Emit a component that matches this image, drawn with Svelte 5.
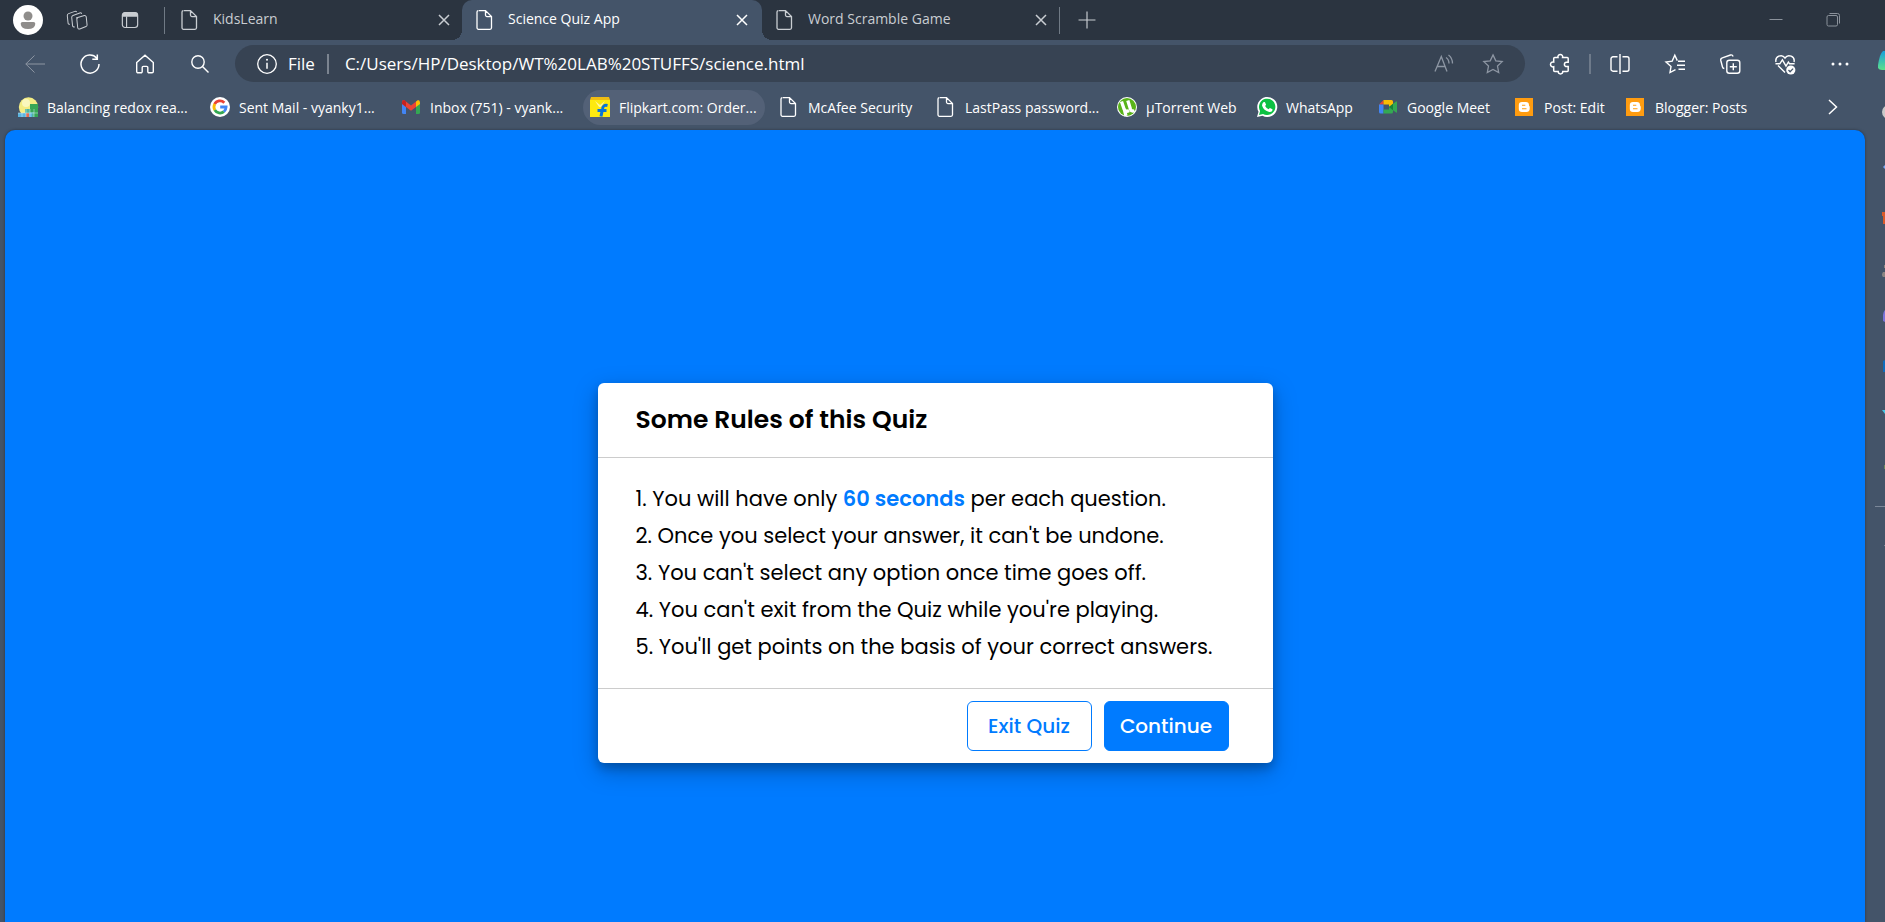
<script>
  const tabs = [
    { title: 'KidsLearn', active: false },
    { title: 'Science Quiz App', active: true },
    { title: 'Word Scramble Game', active: false },
  ];

  const bookmarks = [
    { icon: 'globe', label: 'Balancing redox rea...' },
    { icon: 'google', label: 'Sent Mail - vyanky1...' },
    { icon: 'gmail', label: 'Inbox (751) - vyank...' },
    { icon: 'flipkart', label: 'Flipkart.com: Order...', hover: true },
    { icon: 'file', label: 'McAfee Security' },
    { icon: 'file', label: 'LastPass password...' },
    { icon: 'torrent', label: 'µTorrent Web' },
    { icon: 'whatsapp', label: 'WhatsApp' },
    { icon: 'meet', label: 'Google Meet' },
    { icon: 'blogger', label: 'Post: Edit' },
    { icon: 'blogger', label: 'Blogger: Posts' },
  ];
</script>

{#snippet icon(name)}
  <svg class="icon" viewBox="0 0 20 20" aria-hidden="true">
    {#if name === 'file'}
      <path class="line" stroke-width="1.300" d="M4 .6h6.500L16.500 6.600v11.200a1.500 1.500 0 0 1-1.500 1.500H3.500a1.500 1.500 0 0 1-1.500-1.500V2.100A1.500 1.500 0 0 1 3.500 .6M10.500 .6v4.500a1.500 1.500 0 0 0 1.500 1.500h4.500" />
    {:else if name === 'workspaces'}
      <g class="line" transform="rotate(-6 10 10)">
        <path d="M9.300 7.500l8.500-1.600a1.500 1.500 0 0 1 1.700 1.500v8a1.500 1.500 0 0 1-1.200 1.500l-6.500 1.800a1.500 1.500 0 0 1-1.900-1.400V9a1.500 1.500 0 0 1 1.200-1.500" transform="translate(0 .5)" />
        <path d="M7 16.500a1.500 1.500 0 0 1-2-1.400V7a2 2 0 0 1 1.500-1.900l7-1.800a1.500 1.500 0 0 1 1.800 1.100" />
        <path d="M2.500 13.500a1.500 1.500 0 0 1-1.700-1.400V4.700a2 2 0 0 1 1.500-1.900l6.500-1.600a1.500 1.500 0 0 1 1.700.9" />
      </g>
    {:else if name === 'tabactions'}
      <rect class="line" stroke-width="1.300" x="1.500" y="1.700" width="17" height="16.600" rx="3" />
      <path fill="currentColor" d="M1.500 6.300V4.500a3 3 0 0 1 3-3h11a3 3 0 0 1 3 3v1.800z" />
      <path class="line" stroke-width="1.300" d="M6.200 6v12" />
    {:else if name === 'close'}
      <path class="line" stroke-width="1.500" d="M5 5l10 10M15 5L5 15" />
    {:else if name === 'plus'}
      <path class="line" stroke-width="1.300" d="M10 .6v18.800M.6 10h18.800" />
    {:else if name === 'minimize'}
      <path class="line" d="M3.500 9.500h13" />
    {:else if name === 'restore'}
      <rect class="line" x="4" y="5.500" width="10.500" height="10.500" rx="1.500" />
      <path class="line" d="M6.500 3.500h8a2 2 0 0 1 2 2v8" />
    {:else if name === 'back'}
      <path class="line" d="M20 10H.8M9.500 1.500L.8 10l8.700 8.500" />
    {:else if name === 'reload'}
      <path class="line" stroke-width="1.500" d="M16.800 4.200A9 9 0 1 0 19 10M17.300 .5v4.800h-5" />
    {:else if name === 'home'}
      <path class="line" stroke-width="1.400" d="M1.700 8.600L10 1.200l8.300 7.400V17.500a1.300 1.300 0 0 1-1.300 1.300h-3a1.200 1.200 0 0 1-1.200-1.200v-4a1.200 1.200 0 0 0-1.200-1.200H8.400a1.200 1.200 0 0 0-1.200 1.200v4A1.200 1.200 0 0 1 6 18.800H3a1.300 1.300 0 0 1-1.300-1.300z" />
    {:else if name === 'search'}
      <circle class="line" stroke-width="1.400" cx="8" cy="8" r="6.200" />
      <path class="line" stroke-width="1.400" d="M12.500 12.500L18.500 18.500" />
    {:else if name === 'info'}
      <circle class="line" stroke-width="1.300" cx="10" cy="10" r="9.300" />
      <path class="line" stroke-width="1.500" d="M10 8.800v6" />
      <circle cx="10" cy="5.800" r="1" fill="currentColor" />
    {:else if name === 'read'}
      <path class="line" stroke-width="1.300" d="M1 17.500L7.300 2.500 13 17.500M3.300 12.500h7.700M12 3.500q3 1.800 3 6M14.500 1q4 3 4 8.500" />
    {:else if name === 'star'}
      <path class="line" stroke-width="1.300" d="M10 .9l2.800 5.900 6.400.8-4.700 4.500 1.200 6.500L10 15.500l-5.700 3.100 1.200-6.500L.8 7.600l6.400-.8z" />
    {:else if name === 'puzzle'}
      <path class="line" stroke-width="1.500" d="M8 3.500a2.400 2.400 0 1 1 4.600 0h4.600a1 1 0 0 1 1 1v3.700h-1.600a2.200 2.200 0 0 0 0 4.400h1.600v4a1 1 0 0 1-1 1h-4.400a2.300 2.300 0 0 1-4.600 0H4.700a1 1 0 0 1-1-1v-3.800a2.500 2.500 0 1 1 0-4.800V4.500a1 1 0 0 1 1-1z" />
    {:else if name === 'split'}
      <path class="line" stroke-width="1.400" d="M7.500 2.800H3a2 2 0 0 0-2 2v10.400a2 2 0 0 0 2 2h4.500M12.500 2.800H17a2 2 0 0 1 2 2v10.400a2 2 0 0 1-2 2h-4.500M10 0v20" />
    {:else if name === 'favorites'}
      <path class="line" stroke-width="1.400" d="M10.500 15.600L5 18.500l1-6L1 8l6.200-.9L9.800 1.300l2.500 5.300M13 7.300h7M12 11.300h8M13.500 15.300H20" />
    {:else if name === 'collections'}
      <rect class="line" stroke-width="1.400" x="6.800" y="6.200" width="13" height="13" rx="2.500" />
      <path class="line" stroke-width="1.400" d="M13.300 9.200v7M9.800 12.700h7M4.300 14.500a2 2 0 0 1-1.800-1.500L.8 6.500a2.200 2.200 0 0 1 1.500-2.600L10.500 1a2.200 2.200 0 0 1 2.600 1.500" />
    {:else if name === 'heart'}
      <path class="line" stroke-width="1.400" d="M1 8A5 5 0 0 1 10 4a5 5 0 0 1 9 4M3 11.500l7 7M.5 9.800h4.300l2.600-4 3.600 6.400 2.400-4.200 1.200 1.800h5" />
      <circle cx="15.800" cy="16" r="4.600" fill="#fff" />
      <path d="M13.500 16l1.600 1.700 3-3.100" fill="none" stroke="#445469" stroke-width="1.300" />
    {:else if name === 'dots'}
      <g fill="currentColor"><circle cx="3" cy="10" r="1.500" /><circle cx="10" cy="10" r="1.500" /><circle cx="17" cy="10" r="1.500" /></g>
    {:else if name === 'chevron'}
      <path class="line" stroke-width="1.500" d="M6 3l7.500 7L6 17" />
    {:else if name === 'globe'}
      <circle cx="10.500" cy="10" r="9.700" fill="#f3ec83" />
      <circle cx="8" cy="6" r="4" fill="#faf7bd" />
      <path fill="#4fb59d" d="M7 12h13v8H7z" />
      <path fill="#36a655" d="M12 7h8v13h-4v-5h-4z" />
      <path fill="#5bb5e0" d="M0 16h14v4H0z" />
      <path fill="#e36b4f" d="M8 16h3v4H8z" />
      <path stroke="#d6eef2" stroke-width=".5" d="M4 16v4M8 12v8M12 12v8M16 12v8M0 16h20" />
    {:else if name === 'google'}
      <circle cx="10" cy="10" r="10" fill="#fff" />
      <g fill="none" stroke-width="2.800">
        <path stroke="#ea4335" d="M4.600 7.200A6 6 0 0 1 14.300 5.700" />
        <path stroke="#fbbc05" d="M4.800 13a6 6 0 0 1 0-6" />
        <path stroke="#34a853" d="M13.900 14.600a6 6 0 0 1-9.100-1.600" />
        <path stroke="#4285f4" d="M10.200 10h5.900a6 6 0 0 1-2.200 4.600" />
      </g>
    {:else if name === 'gmail'}
      <path fill="#4285f4" d="M1 6v9.500A1.500 1.500 0 0 0 2.500 17H5V8z" />
      <path fill="#34a853" d="M19 6v9.500a1.500 1.500 0 0 1-1.500 1.500H15V8z" />
      <path fill="#ea4335" d="M1 6.500V5q0-2 2-2l7 5.500L15 4.600V10l-5 3.800L5 10z" />
      <path fill="#c5221f" d="M1 5.500Q1 3 3 3l2 1.600V10L1 7z" />
      <path fill="#fbbc04" d="M15 4.600L17 3q2 0 2 2.500V7l-4 3z" />
    {:else if name === 'flipkart'}
      <path fill="#fdea10" d="M0 3h20v17H0z" />
      <path fill="#f0bd12" d="M1 0h18l1 3H0z" />
      <path fill="#fff6a0" d="M5 4l5 4 5-4-4 6H9z" />
      <path fill="none" stroke="#0873d9" stroke-width="3" d="M17.500 8.500q-4.500-1-5 3.500L11 19.500M7.500 13.500h9" />
    {:else if name === 'torrent'}
      <circle cx="10" cy="10" r="10" fill="#fff" />
      <circle cx="10" cy="10" r="9" fill="#59b319" />
      <path fill="none" stroke="#fff" stroke-width="3.300" d="M4.500 4.500L7 12q1.500 3.500 5 1.500M10.800 3.500l2.700 8.800q1 2.500 4 1.500M7.500 13l1.500 6" />
    {:else if name === 'whatsapp'}
      <path fill="#fff" d="M0 20l1.500-5.300A10 10 0 1 1 5.500 18.700z" />
      <path fill="#0dc143" d="M2 18l1.100-4A8.200 8.200 0 1 1 6 16.900z" />
      <path fill="#fff" d="M6.300 5.300l1.600-.2 1.200 2.700-1 1.300q1.300 2.200 3.500 3.200l1.300-1.400 2.600 1.300q0 3-3.200 2.800-5.800-1.500-7.200-6.200-.2-2 1.200-3.500" />
    {:else if name === 'meet'}
      <path fill="#ea4335" d="M1 7.500L5.500 3v4.500z" />
      <path fill="#4285f4" d="M1 7.500h4.500v9H2.500A1.500 1.500 0 0 1 1 15z" />
      <path fill="#fbbc04" d="M5.500 3h8A1.500 1.500 0 0 1 15 4.500V8l-4 2V7.500H5.500z" />
      <path fill="#34a853" d="M5.500 12.500H11V10l4 2v3a1.500 1.500 0 0 1-1.500 1.500h-8zM11 10l7-5.500q1-.5 1 .8v9.400q0 1.300-1 .8z" />
      <path fill="#188038" d="M11 10l4-3.200v6.400z" />
    {:else if name === 'blogger'}
      <path fill="#ff9c10" d="M0 1h18v18H0z" />
      <path fill="#fff" fill-rule="evenodd" d="M7 5h3.500A3.300 3.300 0 0 1 14 8.300q0 1 .7 1.200v2.500A3.300 3.300 0 0 1 11.300 15H7a3.200 3.200 0 0 1-3.200-3.200V8.200A3.200 3.200 0 0 1 7 5m0 2.800h3.300v1H7zm0 3.500h4.500v1H7z" />
    {/if}
  </svg>
{/snippet}

<div class="browser">
  <div class="window">
    <header class="strip">
      <button class="avatar" aria-label="Profile">
        <svg viewBox="0 0 30 30" aria-hidden="true">
          <circle cx="15" cy="15" r="15" fill="#fff" />
          <circle cx="15" cy="11" r="4.500" fill="#8f8d8b" />
          <path fill="#8f8d8b" d="M9.500 17h11a1.800 1.800 0 0 1 1.800 1.800Q22 24 15 24t-7.300-5.200A1.800 1.800 0 0 1 9.500 17" />
        </svg>
      </button>
      <button class="tool" aria-label="Workspaces">{@render icon('workspaces')}</button>
      <button class="tool small" aria-label="Tab actions">{@render icon('tabactions')}</button>
      <nav class="tabs">
        {#each tabs as tab}
          <div class="tab" class:active={tab.active}>
            {@render icon('file')}
            <a href="#tab">{tab.title}</a>
            <button class="tool" aria-label="Close tab">{@render icon('close')}</button>
          </div>
        {/each}
      </nav>
      <button class="tool small add" aria-label="New tab">{@render icon('plus')}</button>
      <div class="controls">
        <button class="tool" aria-label="Minimize">{@render icon('minimize')}</button>
        <button class="tool" aria-label="Restore">{@render icon('restore')}</button>
      </div>
    </header>

    <div class="toolbar">
      <div class="group">
        <button class="tool dim" aria-label="Back">{@render icon('back')}</button>
        <button class="tool" aria-label="Refresh">{@render icon('reload')}</button>
        <button class="tool" aria-label="Home">{@render icon('home')}</button>
        <button class="tool" aria-label="Search">{@render icon('search')}</button>
      </div>
      <div class="address">
        <button class="tool" aria-label="Site information">{@render icon('info')}</button>
        <label for="url">File</label>
        <input id="url" type="text" value="C:/Users/HP/Desktop/WT%20LAB%20STUFFS/science.html" />
        <button class="tool dim" aria-label="Read aloud">{@render icon('read')}</button>
        <button class="tool dim" aria-label="Add to favorites">{@render icon('star')}</button>
      </div>
      <div class="group actions">
        <button class="tool" aria-label="Extensions">{@render icon('puzzle')}</button>
        <span class="bar"></span>
        <button class="tool" aria-label="Split screen">{@render icon('split')}</button>
        <button class="tool" aria-label="Favorites">{@render icon('favorites')}</button>
        <button class="tool" aria-label="Collections">{@render icon('collections')}</button>
        <button class="tool" aria-label="Browser essentials">{@render icon('heart')}</button>
        <button class="tool" aria-label="Settings">{@render icon('dots')}</button>
      </div>
    </div>

    <nav class="bookmarks">
      {#each bookmarks as mark}
        <a href="#bookmark" class:hover={mark.hover}>{@render icon(mark.icon)}<span>{mark.label}</span></a>
      {/each}
      <button class="tool more" aria-label="More bookmarks">{@render icon('chevron')}</button>
    </nav>

    <main>
      <section class="card">
        <h1>Some Rules of this Quiz</h1>
        <div class="rules">
          <p>1. You will have only <strong>60 seconds</strong> per each question.</p>
          <p>2. Once you select your answer, it can't be undone.</p>
          <p>3. You can't select any option once time goes off.</p>
          <p>4. You can't exit from the Quiz while you're playing.</p>
          <p>5. You'll get points on the basis of your correct answers.</p>
        </div>
        <footer>
          <button class="quit">Exit Quiz</button>
          <button class="continue">Continue</button>
        </footer>
      </section>
    </main>
  </div>

  <aside class="side">
    <svg viewBox="0 0 20 600" width="20" height="600" aria-hidden="true">
      <defs>
        <linearGradient id="copilot" x1="0" y1="0" x2="0" y2="1">
          <stop offset="0" stop-color="#18a0dc" />
          <stop offset="1" stop-color="#5de08a" />
        </linearGradient>
      </defs>
      <path fill="url(#copilot)" d="M20 51h-2q-3 2-5 14v3q1 2 4 2h3z" />
      <circle cx="24" cy="112" r="5.500" fill="none" stroke="#c9c9c9" stroke-width="3" />
      <path fill="#7aa7f5" d="M18 167l2-2v4z" />
      <path fill="#d85a2b" d="M17 212h3v12h-2v-8h-1z" />
      <path fill="#8a8583" d="M18 272h2v5h-2q-2-2 0-5M19 265h1v3h-1z" />
      <path fill="#7a74d8" d="M20 310q-2 2-2 5v6l2 1z" />
      <path fill="#0f6cbd" d="M18 361l2-1v12h-2z" />
      <path fill="#45c7e6" d="M17 410h3v4z" />
      <path fill="#6c8a5c" d="M19 465h1v4h-1z" />
      <path fill="#7b8798" d="M10 506h10v1H10zM19 545h1v1h-1z" />
    </svg>
  </aside>
</div>

<style>
  :global(body) {
    margin: 0;
    background: #445469;
  }
  .browser {
    display: grid;
    grid-template-columns: minmax(0, 1fr) 20px;
    height: 100vh;
    overflow: hidden;
    color: #fff;
    background: #445469;
    background-image: linear-gradient(#2b3440 40px, transparent 40px);
    font-family: "Open Sans", "Noto Sans", sans-serif;
    font-size: 14px;
  }
  .window {
    display: flex;
    flex-direction: column;
    min-width: 0;
  }
  .browser button,
  .browser input {
    font: inherit;
    color: inherit;
    border: 0;
    padding: 0;
    background: none;
  }
  .browser .dim {
    color: #8d96a3;
  }
  a {
    color: inherit;
    text-decoration: none;
  }
  .icon {
    display: block;
    width: 20px;
    height: 20px;
    flex: none;
    overflow: visible;
  }
  .line {
    fill: none;
    stroke: currentColor;
  }
  .tool {
    display: grid;
    place-items: center;
    width: 20px;
    height: 20px;
    flex: none;
  }
  .small .icon {
    width: 18px;
    height: 18px;
  }
  .strip {
    display: flex;
    align-items: center;
    height: 40px;
    color: #c9cdd2;
  }
  .avatar {
    width: 30px;
    height: 30px;
    margin: 0 24px 0 13px;
  }
  .avatar svg {
    display: block;
  }
  .strip > .tool {
    margin-right: 33px;
  }
  .strip > .tool + .tool {
    margin-right: 24px;
  }
  .tabs {
    display: flex;
    height: 40px;
  }
  .tab {
    position: relative;
    display: flex;
    align-items: center;
    gap: 13px;
    width: 298px;
    padding: 0 8px 0 13px;
    box-sizing: border-box;
  }
  .tab a {
    flex: 1;
    line-height: 18px;
    padding-bottom: 2px;
  }
  .tab:first-child,
  .tab:last-child {
    border: solid #707a85;
    border-width: 0 0 0 1px;
    border-image: linear-gradient(transparent 8px, #707a85 8px 33px, transparent 33px) 1;
  }
  .tab:first-child {
    padding-left: 15px;
  }
  .tab:last-child {
    border-width: 0 1px 0 0;
  }
  .tab.active {
    width: 300px;
    padding-right: 10px;
    color: #fff;
    background: #445469;
    border-radius: 10px 10px 0 0;
  }
  .tab.active::before,
  .tab.active::after {
    content: "";
    position: absolute;
    bottom: 0;
    width: 10px;
    height: 10px;
  }
  .tab.active::before {
    right: 100%;
    background: radial-gradient(circle at 0 0, transparent 10px, #445469 10px);
  }
  .tab.active::after {
    left: 100%;
    background: radial-gradient(circle at 100% 0, transparent 10px, #445469 10px);
  }
  .strip > .tool.add {
    margin: 0 0 0 17px;
  }
  .controls {
    display: flex;
    gap: 37px;
    margin: 0 22px 0 auto;
    color: #8b929b;
  }
  .toolbar {
    display: flex;
    align-items: center;
    gap: 25px;
    height: 37px;
    padding: 5px 15px 0 25px;
  }
  .group {
    display: flex;
    align-items: center;
    gap: 35px;
  }
  .address {
    display: flex;
    align-items: center;
    flex: 1;
    height: 37px;
    padding: 0 22px;
    border-radius: 19px;
    background: #374353;
    font-size: 17px;
  }
  .address label {
    margin: 0 12px 0 11px;
  }
  .browser .address input {
    flex: 1;
    min-width: 0;
    height: 20px;
    margin-right: 20px;
    padding-left: 16px;
    border-left: 2px solid #7b8490;
    outline: 0;
  }
  .address .dim + .dim {
    margin-left: 29px;
  }
  .bar {
    width: 2px;
    height: 20px;
    margin: 0 -16px;
    background: #6e7a8a;
  }
  .bookmarks {
    display: grid;
    grid-template-columns: 192px 191px 189px 189px 157px 181px 140px 121px 137px 111px 1fr auto;
    align-items: center;
    height: 46px;
    padding: 2px 22px 0 18px;
  }
  .bookmarks a {
    display: flex;
    align-items: center;
    gap: 9px;
    height: 35px;
    white-space: nowrap;
  }
  .bookmarks a.hover {
    width: 175px;
    margin-left: -7px;
    padding-left: 7px;
    border-radius: 18px;
    background: #536177;
  }
  main {
    flex: 1;
    margin-left: 5px;
    padding-top: 253px;
    border-radius: 10px 10px 0 0;
    background: #007bff;
    box-shadow: 0 0 3px #2b3440;
    font-family: Poppins, Inter, sans-serif;
  }
  .card {
    width: 675px;
    max-width: 100%;
    margin: 0 auto;
    color: #000;
    background: #fff;
    border-radius: 6px;
    box-shadow: 0 5px 10px rgba(0, 0, 0, 0.2), 0 8px 24px rgba(0, 0, 0, 0.25);
  }
  h1 {
    margin: 0;
    padding: 0 38px;
    border-bottom: 1px solid #ccc;
    font-size: 25px;
    font-weight: 600;
    line-height: 74px;
  }
  .rules {
    padding: 22px 38px 23px;
  }
  .rules p {
    margin: 0;
    font-size: 21px;
    line-height: 37px;
    white-space: nowrap;
  }
  strong {
    font-weight: 600;
    color: #007bff;
  }
  footer {
    display: flex;
    justify-content: flex-end;
    gap: 12px;
    padding: 12px 44px;
    border-top: 1px solid #ccc;
  }
  .browser footer button {
    width: 125px;
    height: 50px;
    border: 1px solid #007bff;
    border-radius: 6px;
    color: #007bff;
    font-size: 20px;
    font-weight: 500;
  }
  .browser footer .continue {
    color: #fff;
    background: #007bff;
  }
</style>
